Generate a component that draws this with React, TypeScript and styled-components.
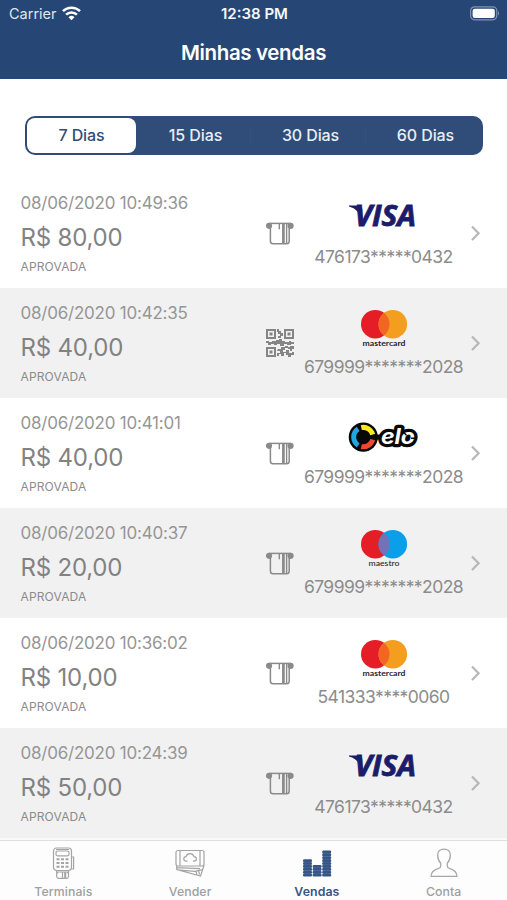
import React from "react";
import styled, { createGlobalStyle } from "styled-components";

const NAVY = "#264775";

const Global = createGlobalStyle`
  * { box-sizing: border-box; }
  body { margin: 0; background: #fff; font-family: Inter, "Liberation Sans", sans-serif; }
`;

const Screen = styled.div`
  width: 507px;
  height: 900px;
  display: flex;
  flex-direction: column;
  overflow: hidden;
  background: #fff;
`;

const Header = styled.header`
  height: 79px;
  flex: none;
  background: ${NAVY};
  color: #fff;
  display: flex;
  flex-direction: column;
`;

const StatusBar = styled.div`
  height: 27px;
  display: grid;
  grid-template-columns: 1fr auto 1fr;
  align-items: center;
  padding: 0 7px 0 9px;
`;

const Carrier = styled.div`
  display: flex;
  align-items: center;
  gap: 5px;
  font-size: 14.5px;
  line-height: 27px;
  color: #dfe6ef;
`;

const Clock = styled.div`
  font-size: 15px;
  font-weight: 600;
  color: #f4f7fb;
`;

const BatterySlot = styled.div`
  display: flex;
  justify-content: flex-end;
`;

const Title = styled.h1`
  margin: 0;
  height: 51px;
  line-height: 51px;
  text-align: center;
  font-size: 20.5px;
  font-weight: 600;
  letter-spacing: -0.35px;
`;

const Segments = styled.div`
  flex: none;
  margin: 37px 24px 24px 25px;
  height: 39px;
  padding: 2px;
  border-radius: 10px;
  background: #2f4d78;
  display: grid;
  grid-template-columns: 109px 1fr 1fr 1fr;
`;

const Segment = styled.button<{ $active?: boolean; $divided?: boolean }>`
  border: 0;
  padding: ${(p) => (p.$active ? "0 0 1px" : "0 0 1px 4px")};
  font: 500 16px Inter, sans-serif;
  letter-spacing: -0.1px;
  border-radius: ${(p) => (p.$active ? "8px" : "0")};
  background: ${(p) => (p.$active ? "#fff" : "linear-gradient(#36527c, #36527c) right center / 1px 20px no-repeat")};
  background-size: ${(p) => (p.$active ? "auto" : p.$divided ? "1px 20px" : "0 0")};
  color: ${(p) => (p.$active ? "#2f4d78" : "#e9eef5")};
`;

const List = styled.main`
  flex: 1;
  min-height: 0;
  overflow: hidden;
  margin-top: -1px;
  background: #f9f9f9;
`;

const Row = styled.article`
  height: 110px;
  display: grid;
  grid-template-columns: 245px 28px 1fr 12px;
  padding: 0 24px 0 20.5px;
  align-items: center;
  background: #fff;
  &:nth-child(even) { background: #f1f1f1; }
`;

const Info = styled.div`
  align-self: start;
  padding-top: 14px;
  color: #8b8b8b;
  white-space: nowrap;
`;

const DateText = styled.div`
  font-size: 17px;
  line-height: 22px;
  letter-spacing: -0.22px;
  color: #969696;
`;

const Amount = styled.div`
  margin-top: 8px;
  font-size: 24px;
  line-height: 31px;
  letter-spacing: -0.2px;
  color: #828282;
`;

const Status = styled.div`
  margin-top: 6px;
  font-size: 12px;
  line-height: 16px;
  letter-spacing: 0.15px;
`;

const Card = styled.div`
  align-self: start;
  display: flex;
  flex-direction: column;
  align-items: center;
  padding-top: 17px;
  width: 180px;
`;

const CardNumber = styled.div`
  margin-top: 1px;
  font-size: 17.5px;
  line-height: 23px;
  letter-spacing: -0.55px;
  color: #8c8c8c;
  white-space: nowrap;
`;

const ChevronSlot = styled.div`
  display: flex;
  width: 12px;
  margin-left: -3px;
`;

const TabBar = styled.nav`
  flex: none;
  height: 60px;
  border-top: 1px solid #dedede;
  background: #fdfdfd;
  display: grid;
  grid-template-columns: repeat(4, 1fr);
`;

const Tab = styled.a<{ $active?: boolean }>`
  display: flex;
  flex-direction: column;
  align-items: center;
  padding-top: 5px;
  gap: 3px;
  font-size: 12.3px;
  line-height: 18px;
  font-weight: ${(p) => (p.$active ? 600 : 500)};
  letter-spacing: 0.08px;
  color: ${(p) => (p.$active ? "#365587" : "#a0a0a0")};
`;

const Wifi = () => (
  <svg width="19" height="15" viewBox="0 0 19 15" fill="none" stroke="#fff" strokeWidth="2.5">
    <path d="M1 5.2a12 12 0 0 1 17 0M4.1 8.6a7.7 7.7 0 0 1 10.8 0" />
    <path d="M9.5 14.3 6.5 11.3a4.3 4.3 0 0 1 6 0Z" fill="#fff" stroke="none" />
  </svg>
);

const Battery = () => (
  <svg width="31" height="15" viewBox="0 0 31 15">
    <rect x="1.6" y=".8" width="26.2" height="13" rx="4" fill="none" stroke="#8194b0" strokeWidth="1.2" />
    <rect x="3.6" y="2.7" width="22.2" height="9.2" rx="2.2" fill="#fff" />
    <path d="M29 5v4.6q2-2.3 0-4.6" fill="#8194b0" />
  </svg>
);

const ChipSlot = () => (
  <svg width="28" height="24" viewBox="0 0 28 24" fill="none" stroke="#8a8a8a" strokeWidth="1.5">
    <path d="M2.8 2.4H24.8" />
    <circle cx="3" cy="4.8" r="3.1" fill="#8a8a8a" stroke="none" />
    <circle cx="24.6" cy="4.8" r="3.1" fill="#8a8a8a" stroke="none" />
    <path d="M4.4 3V19.9Q4.4 22.7 7 22.7H20.6Q23.2 22.7 23.2 19.9V3" />
    <path d="M13.3 3V8.3M20.6 3V22" strokeWidth="1.4" />
    <path d="M17.4 3V22" strokeWidth="2.7" />
  </svg>
);

const QR = () => (
  <svg width="28" height="28" viewBox="0 0 28 28" fill="none" stroke="#858585" strokeWidth="2">
    <path d="M1 1h8v8H1zM19 1h8v8h-8zM1 19h8v8H1z" />
    <path
      fill="#858585"
      stroke="none"
      d="M3.5 3.5h3v3h-3zM21.5 3.5h3v3h-3zM3.5 21.5h3v3h-3zM11 0h2v2h2v2h2v3h-2v2h-3V7h2V5h-2V3h-1zM0 12h3v1h3v-1h4v-1h3v-1h3v2h3v1h4v-1h2v1h3v2h-3v1h-4v-1h-3v2h-4v-2h-3v1H8v-1H5v1H2v-2H0zM19 17h3v2h-3zM24 17h4v3h-2v2h-2v-2h-2v-2h2zM12 20h3v-2h4v3h-2v2h3v-2h3v3h3v-1h2v3h-3v2h-3v-2h-2v-2h-2v3h-3v-2h-2v2h-2v-3h3v-2h-3z"
    />
  </svg>
);

const Chevron = () => (
  <svg width="12" height="18" viewBox="0 0 12 18" fill="none" stroke="#b7b7b7" strokeWidth="2.2">
    <path d="M1 2.4 7.6 9.2 1 16" />
  </svg>
);

type Brand = "visa" | "mastercard" | "maestro" | "elo";

const Circles = ({ right, mix, label }: { right: string; mix: string; label: string }) => (
  <>
    <circle cx="30.3" cy="19.2" r="14.3" fill="#e41d27" />
    <circle cx="47.8" cy="19.2" r="14.3" fill={right} />
    <path d="M39.05 7.9a14.3 14.3 0 0 1 0 22.6a14.3 14.3 0 0 1 0-22.6" fill={mix} />
    <text
      x="39"
      y="40.6"
      textAnchor="middle"
      fontFamily="Lato, sans-serif"
      fontSize="8"
      fontWeight={label === "maestro" ? 500 : 700}
      textLength={label === "maestro" ? 31 : 43}
      lengthAdjust="spacingAndGlyphs"
      fill="#262626"
    >
      {label}
    </text>
  </>
);

const BrandLogo = ({ brand }: { brand: Brand }) => (
  <svg width="78" height="49" viewBox="0 0 78 49">
    {brand === "visa" && (
      <g fill="#1b1d6b">
        <text
          x="9.5"
          y="31"
          fontFamily="Open Sans, sans-serif"
          fontSize="28.2"
          fontStyle="italic"
          fontWeight="700"
          textLength="61.5"
          lengthAdjust="spacingAndGlyphs"
          stroke="#1b1d6b"
          strokeWidth=".8"
        >
          VISA
        </text>
        <path d="M4 10.5H14.8L17.2 13.5L17.8 26Q14 13.8 4 11.4Z" />
      </g>
    )}
    {brand === "mastercard" && <Circles right="#f49e20" mix="#f26522" label="mastercard" />}
    {brand === "maestro" && <Circles right="#0a9fe8" mix="#7472b7" label="maestro" />}
    {brand === "elo" && (
      <>
        <circle cx="18.3" cy="22.1" r="14.6" fill="#080808" />
        <g fill="none" strokeWidth="5">
          <path d="M13.2 30.3A9.7 9.7 0 0 1 13.2 13.9" stroke="#21a5de" />
          <path d="M16.3 12.6A9.7 9.7 0 0 1 27.7 19.7" stroke="#f8e91c" />
          <path d="M27.7 24.5A9.7 9.7 0 0 1 16.3 31.6" stroke="#ee482f" />
        </g>
        <path d="M28 22.1h8" stroke="#080808" strokeWidth="5" />
        <text
          x="36"
          y="29"
          fontFamily="Inter, sans-serif"
          fontSize="21"
          fontStyle="italic"
          fontWeight="700"
          textLength="34"
          lengthAdjust="spacingAndGlyphs"
          paintOrder="stroke"
          stroke="#080808"
          strokeWidth="6.4"
          strokeLinejoin="round"
          fill="#fff"
        >
          elo
        </text>
        <path d="m58.5 17.2 3 3M66 23.3h4.5" stroke="#080808" strokeWidth="1.5" />
      </>
    )}
  </svg>
);

const TerminalIcon = () => (
  <svg width="32" height="34" viewBox="0 0 32 34" fill="none" stroke="#a4a4a4" strokeWidth="1.2">
    <rect x="6.5" y="2" width="18" height="22.5" rx="3" />
    <rect x="9" y="5" width="13" height="4.8" rx="1.5" />
    <path d="M9 3.5h13M25 11h1.6v12H25" />
    <path d="M9.5 13.2h3M14 13.2h3M18.5 13.2h3M9.5 17h3M14 17h3M18.5 17h3M9.5 20.8h3M14 20.8h3M18.5 20.8h3" strokeWidth="2" />
    <path d="M9.7 24.5v6q0 1.8 1.8 1.8h8.2q1.8 0 1.8-1.8v-6M9.7 27.5 11 26h9.2l1.3 1.5M15.5 26v6" />
    <path d="M18.2 26v6" strokeWidth="2" />
  </svg>
);

const MoneyIcon = () => (
  <svg width="32" height="34" viewBox="0 0 32 34" fill="none" stroke="#a4a4a4" strokeWidth="1.2">
    <rect x="2" y="4.5" width="28" height="15.5" rx="2" />
    <path d="M6 4.5V20M26 4.5V20M13.5 15.2h-1.3a2.3 2.3 0 0 1-.2-4.6 4.2 4.2 0 0 1 8 0 2.3 2.3 0 0 1 .2 4.6h-1.3" />
    <path d="M2.5 19.5 2.8 23.6 26.5 30 30 19.5M3 23.8l18 1.5 7.5-1.6M3 21.7l23 1M22 25.3l.8 3.2M24.5 24l1 4.6" />
  </svg>
);

const coins = (x: number, count: number) =>
  Array.from({ length: count }, (_, i) => (
    <rect key={i} x={x} y={27.8 - i * 2.9} width="9" height="2.6" rx="1.2" />
  ));

const SalesIcon = () => (
  <svg width="32" height="34" viewBox="0 0 32 34" fill="#365587">
    <g>
      <path d="M2.6 14h7.8v16H2.6zM12.2 20h7.8v10h-7.8zM21.8 6h7.8v24h-7.8z" opacity=".75" />
      {coins(2, 6)}
      {coins(11.6, 4)}
      {coins(21.2, 9)}
    </g>
  </svg>
);

const AccountIcon = () => (
  <svg width="32" height="34" viewBox="0 0 32 34" fill="none" stroke="#a8a8a8" strokeWidth="1.3" strokeLinejoin="round">
    <path d="M12.7 17.2C10.5 15 9.7 12.8 9.7 9.3C9.7 5.4 12 3.2 16 3.2s6.3 2.2 6.3 6.1c0 3.5-.8 5.7-3 7.9v3c0 1.5 1 2 2.5 2.4 4.5 1.2 7 3 7.2 7.7H3c.2-4.7 2.7-6.5 7.2-7.7 1.5-.4 2.5-.9 2.5-2.4Z" />
  </svg>
);

type Sale = { time: string; value: string; brand: Brand; card: string; qr?: boolean };

const sales: Sale[] = [
  { time: "10:49:36", value: "80,00", brand: "visa", card: "476173*****0432" },
  { time: "10:42:35", value: "40,00", brand: "mastercard", card: "679999*******2028", qr: true },
  { time: "10:41:01", value: "40,00", brand: "elo", card: "679999*******2028" },
  { time: "10:40:37", value: "20,00", brand: "maestro", card: "679999*******2028" },
  { time: "10:36:02", value: "10,00", brand: "mastercard", card: "541333****0060" },
  { time: "10:24:39", value: "50,00", brand: "visa", card: "476173*****0432" },
];

export default function App() {
  return (
    <Screen>
      <Global />
      <Header>
        <StatusBar>
          <Carrier>
            Carrier <Wifi />
          </Carrier>
          <Clock>12:38 PM</Clock>
          <BatterySlot>
            <Battery />
          </BatterySlot>
        </StatusBar>
        <Title>Minhas vendas</Title>
      </Header>
      <Segments>
        <Segment $active>7 Dias</Segment>
        <Segment $divided>15 Dias</Segment>
        <Segment $divided>30 Dias</Segment>
        <Segment>60 Dias</Segment>
      </Segments>
      <List>
        {sales.map((s) => (
          <Row key={s.time}>
            <Info>
              <DateText>08/06/2020 {s.time}</DateText>
              <Amount>R$ {s.value}</Amount>
              <Status>APROVADA</Status>
            </Info>
            {s.qr ? <QR /> : <ChipSlot />}
            <Card>
              <BrandLogo brand={s.brand} />
              <CardNumber>{s.card}</CardNumber>
            </Card>
            <ChevronSlot>
              <Chevron />
            </ChevronSlot>
          </Row>
        ))}
      </List>
      <TabBar>
        <Tab>
          <TerminalIcon />
          Terminais
        </Tab>
        <Tab>
          <MoneyIcon />
          Vender
        </Tab>
        <Tab $active>
          <SalesIcon />
          Vendas
        </Tab>
        <Tab>
          <AccountIcon />
          Conta
        </Tab>
      </TabBar>
    </Screen>
  );
}
